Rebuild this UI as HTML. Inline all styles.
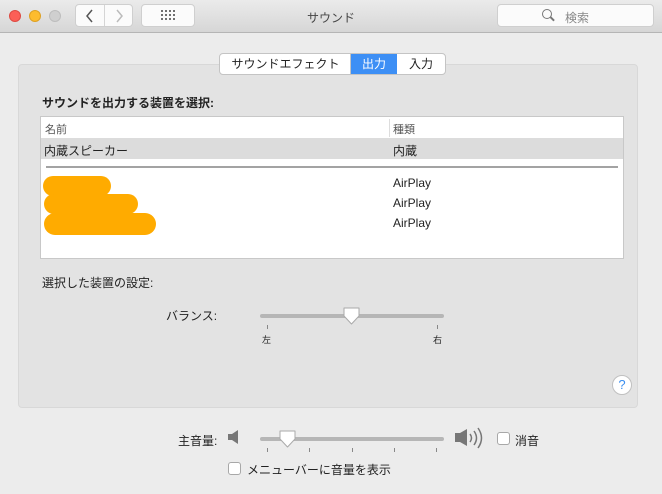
<!DOCTYPE html>
<html><head><meta charset="utf-8"><style>
*{margin:0;padding:0;box-sizing:border-box}
body{width:662px;height:494px;background:#ececec;font-family:"Liberation Sans","Noto Sans CJK JP",sans-serif;font-size:12px;color:#222;position:relative;overflow:hidden}
.a{position:absolute}
.tb{left:0;top:0;width:662px;height:33px;background:linear-gradient(#ebebeb,#d6d6d6);border-bottom:1px solid #b5b5b5}
.dot{width:12px;height:12px;border-radius:50%;top:10px}
.btn{background:#fbfbfb;border:1px solid #cfcfcf;border-radius:4px}
.grp{left:18px;top:64px;width:620px;height:344px;background:#e3e3e3;border:1px solid #d8d8d8;border-radius:4px}
.tab{top:53px;height:22px;background:#fff;border:1px solid #c4c4c4;border-radius:4px;left:219px;width:227px;overflow:hidden}
.tab span{position:absolute;top:0;height:20px;line-height:20px;text-align:center;font-size:12px}
.tbl{left:40px;top:116px;width:584px;height:143px;background:#fff;border:1px solid #c8c8c8}
.blob{background:#ffab00;border-radius:12px}
.chk{width:13px;height:13px;border:1px solid #a8a8a8;border-radius:3px;background:#fff}
.track{height:4px;background:#b6b6b6;border-radius:2px}
.tick{width:1px;height:4px;background:#888}
</style></head><body>
<div class="a tb"></div>
<div class="a dot" style="left:9px;background:#fc5f57;border:1px solid #de4a42"></div>
<div class="a dot" style="left:29px;background:#fdbc2e;border:1px solid #dea123"></div>
<div class="a dot" style="left:49px;background:#cfcfcf;border:1px solid #bdbdbd"></div>
<div class="a btn" style="left:75px;top:4px;width:58px;height:23px"></div>
<div class="a" style="left:104px;top:5px;width:1px;height:21px;background:#d5d5d5"></div>
<svg class="a" style="left:84px;top:8px" width="12" height="16"><path d="M8 2L3 8l5 6" fill="none" stroke="#555" stroke-width="1.5"/></svg>
<svg class="a" style="left:113px;top:8px" width="12" height="16"><path d="M4 2l5 6-5 6" fill="none" stroke="#bbb" stroke-width="1.5"/></svg>
<div class="a btn" style="left:141px;top:4px;width:54px;height:23px"></div>
<div class="a" style="left:160px;top:9px;width:16px;height:12px;background:radial-gradient(circle,#555 0.8px,transparent 1.2px) 0 0/4px 4px"></div>
<div class="a" style="left:307px;top:9px;font-size:12px;color:#444">サウンド</div>
<div class="a btn" style="left:497px;top:4px;width:157px;height:23px"></div>
<div class="a" style="left:542px;top:9px;width:10px;height:10px;border:1.3px solid #777;border-radius:50%"></div>
<div class="a" style="left:550px;top:18px;width:5px;height:1.5px;background:#777;transform:rotate(45deg)"></div>
<div class="a" style="left:565px;top:9px;color:#888;font-size:12px">検索</div>

<div class="a grp"></div>
<div class="a tab">
<span style="left:0;width:131px">サウンドエフェクト</span>
<span style="left:130px;width:47px;background:#3d8ff5;color:#fff;border-left:1px solid #c4c4c4">出力</span>
<span style="left:177px;width:48px">入力</span>
</div>
<div class="a" style="left:42px;top:94px;font-weight:bold;font-size:12px">サウンドを出力する装置を選択:</div>
<div class="a tbl">
<div class="a" style="left:4px;top:4px;font-size:11px;color:#555">名前</div>
<div class="a" style="left:348px;top:2px;width:1px;height:18px;background:#ddd"></div>
<div class="a" style="left:352px;top:4px;font-size:11px;color:#555">種類</div>
<div class="a" style="left:0;top:21px;width:582px;height:21px;background:#dcdcdc"></div>
<div class="a" style="left:3px;top:25px">内蔵スピーカー</div>
<div class="a" style="left:352px;top:25px">内蔵</div>
<div class="a" style="left:5px;top:49px;width:572px;height:2px;background:#a3a3a3"></div>
<div class="a" style="left:352px;top:59px">AirPlay</div>
<div class="a" style="left:352px;top:79px">AirPlay</div>
<div class="a" style="left:352px;top:99px">AirPlay</div>
<div class="a blob" style="left:2px;top:59px;width:68px;height:20px"></div>
<div class="a blob" style="left:3px;top:77px;width:94px;height:20px"></div>
<div class="a blob" style="left:3px;top:96px;width:112px;height:22px"></div>
</div>

<div class="a" style="left:42px;top:274px">選択した装置の設定:</div>
<div class="a" style="left:166px;top:307px">バランス:</div>
<div class="a track" style="left:260px;top:314px;width:184px"></div>
<div class="a tick" style="left:267px;top:325px"></div>
<div class="a tick" style="left:437px;top:325px"></div>
<div class="a" style="left:262px;top:333px;font-size:9px">左</div>
<div class="a" style="left:433px;top:333px;font-size:9px">右</div>
<svg class="a" style="left:342px;top:306px" width="20" height="22"><path d="M2 2h15v8l-7.5 8L2 10z" fill="#fff" stroke="#aaa" stroke-linejoin="round"/></svg>
<div class="a" style="left:612px;top:375px;width:20px;height:20px;border-radius:50%;background:#fff;border:1px solid #c0c0c0;color:#3a8ef0;text-align:center;line-height:18px;font-size:13px">?</div>

<div class="a" style="left:178px;top:432px">主音量:</div>
<svg class="a" style="left:226px;top:428px" width="16" height="18"><path d="M2 6h4l6-4v14l-6-4H2z" fill="#777"/></svg>
<div class="a track" style="left:260px;top:437px;width:184px"></div>
<div class="a tick" style="left:267px;top:448px"></div><div class="a tick" style="left:309px;top:448px"></div><div class="a tick" style="left:352px;top:448px"></div><div class="a tick" style="left:394px;top:448px"></div><div class="a tick" style="left:436px;top:448px"></div>
<svg class="a" style="left:278px;top:429px" width="20" height="22"><path d="M2 2h15v8l-7.5 8L2 10z" fill="#fff" stroke="#aaa" stroke-linejoin="round"/></svg>
<svg class="a" style="left:453px;top:426px" width="36" height="24"><path d="M2 7h5l7-4v17l-7-4H2z" fill="#777"/><path d="M17 8q3 4 0 8M21 5q5 7 0 14M25 2q7 10 0 20" fill="none" stroke="#777" stroke-width="1.5"/></svg>
<div class="a chk" style="left:497px;top:432px"></div>
<div class="a" style="left:515px;top:432px">消音</div>
<div class="a chk" style="left:228px;top:462px"></div>
<div class="a" style="left:247px;top:461px">メニューバーに音量を表示</div>
</body></html>
